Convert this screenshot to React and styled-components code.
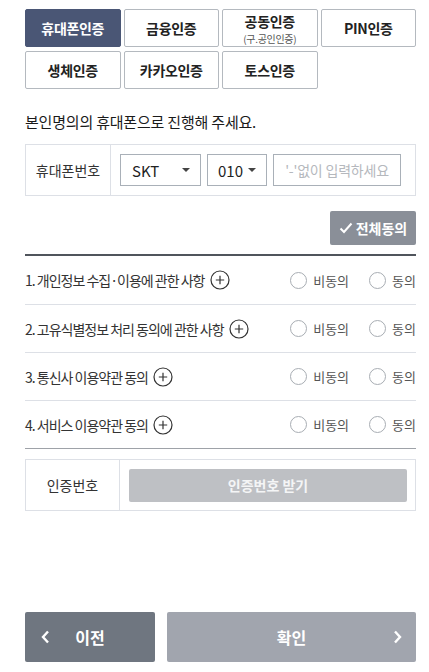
import React from "react";
import styled, { createGlobalStyle } from "styled-components";

const Global = createGlobalStyle`
  html, body { margin: 0; padding: 0; background: #fff; }
  body { font-family: "Noto Sans CJK KR", "Noto Sans", sans-serif; color: #222; }
  * { box-sizing: border-box; }
`;

const Page = styled.div`
  width: 429px;
  height: 672px;
  padding: 9px 13px 0 25px;
  display: flex;
  flex-direction: column;
`;

const Tabs = styled.div`
  display: grid;
  grid-template-columns: repeat(4, 1fr);
  column-gap: 3px;
  row-gap: 4px;
`;

const Tab = styled.button`
  height: 38px;
  border: 1px solid ${(p) => (p.$active ? "#4a5675" : "#b4b9bf")};
  background: ${(p) => (p.$active ? "#4a5675" : "#fff")};
  color: ${(p) => (p.$active ? "#fff" : "#222")};
  border-radius: 2px;
  font-family: inherit;
  font-size: 14px;
  font-weight: 700;
  letter-spacing: -0.3px;
  padding: 0;
  display: flex;
  flex-direction: column;
  align-items: center;
  justify-content: center;
  line-height: 20px;
`;

const TabSub = styled.span`
  display: block;
  margin-top: 1px;
  font-size: 10px;
  line-height: 14px;
  font-weight: 400;
  color: #555;
`;

const Heading = styled.p`
  margin: 22px 0 0;
  font-size: 15px;
  font-weight: 400;
  letter-spacing: -0.2px;
  line-height: 22px;
  color: #1a1a1a;
`;

const Table = styled.div`
  margin-top: ${(p) => p.$mt}px;
  display: flex;
  height: 52px;
  border: 1px solid #dde0e6;
`;

const LabelCell = styled.div`
  width: ${(p) => p.$w}px;
  flex: none;
  border-right: 1px solid #dde0e6;
  display: flex;
  align-items: center;
  justify-content: center;
  font-size: 14px;
  color: #333;
`;

const FieldCell = styled.div`
  flex: 1;
  display: flex;
  align-items: center;
  gap: 6px;
  padding: 0 ${(p) => p.$pr}px 0 9px;
`;

const Select = styled.div`
  width: ${(p) => p.$w}px;
  height: 32px;
  border: 1px solid #a9b0b8;
  display: flex;
  align-items: center;
  justify-content: space-between;
  padding: 0 10px 0 ${(p) => p.$pl}px;
  font-size: 15px;
  color: #222;
`;

const Caret = styled.span`
  width: 0;
  height: 0;
  border-left: 4px solid transparent;
  border-right: 4px solid transparent;
  border-top: 4px solid #444;
`;

const Input = styled.div`
  flex: 1;
  height: 32px;
  border: 1px solid #a9b0b8;
  display: flex;
  align-items: center;
  justify-content: center;
  font-size: 14px;
  color: #b5b8bd;
  letter-spacing: -0.2px;
`;

const AgreeAllRow = styled.div`
  display: flex;
  justify-content: flex-end;
  margin-top: 15px;
`;

const AgreeAll = styled.button`
  width: 86px;
  height: 34px;
  border: none;
  border-radius: 2px;
  background: #8a8f98;
  color: #fff;
  font-family: inherit;
  font-size: 14px;
  font-weight: 700;
  display: flex;
  align-items: center;
  justify-content: center;
  gap: 3px;
  padding: 0;
`;

const List = styled.div`
  margin-top: 9px;
  border-top: 2px solid #50555c;
  border-bottom: 1px solid #9ea2a8;
`;

const Row = styled.div`
  height: 48px;
  display: flex;
  align-items: center;
  border-top: ${(p) => (p.$first ? "none" : "1px solid #dde0e6")};
`;

const RowTitle = styled.div`
  flex: 1;
  display: flex;
  align-items: center;
  gap: 5px;
  font-size: 14px;
  color: #333;
  letter-spacing: -1px;
`;

const Radios = styled.div`
  display: flex;
  align-items: center;
`;

const Radio = styled.label`
  display: flex;
  align-items: center;
  gap: 6px;
  font-size: 13px;
  color: #555;
  margin-left: ${(p) => p.$ml}px;
`;

const Circle = styled.span`
  width: 17px;
  height: 17px;
  border-radius: 50%;
  border: 1px solid #a8adb3;
  background: #fff;
`;

const CodeButton = styled.button`
  flex: 1;
  height: 33px;
  border: none;
  border-radius: 2px;
  background: #bec0c4;
  color: #f4f5f6;
  font-family: inherit;
  font-size: 14px;
  font-weight: 700;
`;

const Spacer = styled.div`
  flex: none;
  height: 101px;
`;

const Bottom = styled.div`
  display: flex;
  gap: 12px;
`;

const NavButton = styled.button`
  height: 50px;
  width: ${(p) => (p.$grow ? "auto" : "130px")};
  flex: ${(p) => (p.$grow ? 1 : "none")};
  border: none;
  border-radius: 2px;
  background: ${(p) => p.$bg};
  color: #fff;
  font-family: inherit;
  font-size: 16px;
  font-weight: 700;
  display: flex;
  align-items: center;
  position: relative;
  padding: 0;
  justify-content: center;
`;

const NavIcon = styled.svg`
  position: absolute;
  top: 50%;
  margin-top: -7px;
  ${(p) => (p.$left ? "left: 16px;" : "right: 14px;")}
`;

const PlusIcon = () => (
  <svg width="20" height="20" viewBox="0 0 20 20">
    <circle cx="10" cy="10" r="9" fill="none" stroke="#333" strokeWidth="1.2" />
    <path d="M10 5.8v8.4M5.8 10h8.4" stroke="#333" strokeWidth="1.2" />
  </svg>
);

const items = [
  "1. 개인정보 수집·이용에 관한 사항",
  "2. 고유식별정보 처리 동의에 관한 사항",
  "3. 통신사 이용약관 동의",
  "4. 서비스 이용약관 동의",
];

export default function App() {
  return (
    <>
      <Global />
      <Page>
        <Tabs>
          <Tab $active>휴대폰인증</Tab>
          <Tab>금융인증</Tab>
          <Tab>
            공동인증
            <TabSub>(구.공인인증)</TabSub>
          </Tab>
          <Tab>PIN인증</Tab>
          <Tab>생체인증</Tab>
          <Tab>카카오인증</Tab>
          <Tab>토스인증</Tab>
        </Tabs>

        <Heading>본인명의의 휴대폰으로 진행해 주세요.</Heading>

        <Table $mt={11}>
          <LabelCell $w={85}>휴대폰번호</LabelCell>
          <FieldCell $pr={14}>
            <Select $w={81} $pl={11}>
              SKT <Caret />
            </Select>
            <Select $w={60} $pl={10}>
              010 <Caret />
            </Select>
            <Input>'-'없이 입력하세요</Input>
          </FieldCell>
        </Table>

        <AgreeAllRow>
          <AgreeAll>
            <svg width="14" height="12" viewBox="0 0 14 12">
              <path d="M1.5 6.5l3.5 3.5 7.5-8.5" fill="none" stroke="#fff" strokeWidth="2" />
            </svg>
            전체동의
          </AgreeAll>
        </AgreeAllRow>

        <List>
          {items.map((t, i) => (
            <Row key={t} $first={i === 0}>
              <RowTitle>
                {t}
                <PlusIcon />
              </RowTitle>
              <Radios>
                <Radio>
                  <Circle />
                  비동의
                </Radio>
                <Radio $ml={20}>
                  <Circle />
                  동의
                </Radio>
              </Radios>
            </Row>
          ))}
        </List>

        <Table $mt={10}>
          <LabelCell $w={94}>인증번호</LabelCell>
          <FieldCell $pr={8}>
            <CodeButton>인증번호 받기</CodeButton>
          </FieldCell>
        </Table>

        <Spacer />

        <Bottom>
          <NavButton $bg="#6f7680">
            <NavIcon $left width="9" height="14" viewBox="0 0 9 14">
              <path d="M7 1.5L2 7l5 5.5" fill="none" stroke="#fff" strokeWidth="2.4" />
            </NavIcon>
            이전
          </NavButton>
          <NavButton $grow $bg="#a1a5ae">
            확인
            <NavIcon width="9" height="14" viewBox="0 0 9 14">
              <path d="M2 1.5L7 7l-5 5.5" fill="none" stroke="#fff" strokeWidth="2.4" />
            </NavIcon>
          </NavButton>
        </Bottom>
      </Page>
    </>
  );
}
